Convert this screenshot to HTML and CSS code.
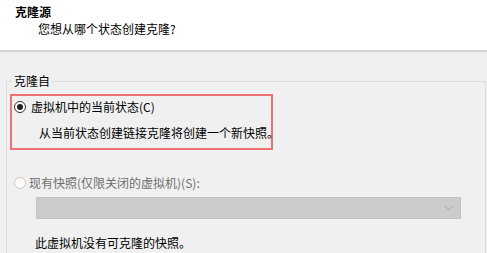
FILE: index.html
```html
<!DOCTYPE html>
<html lang="zh-CN">
<head>
<meta charset="utf-8">
<title>克隆源</title>
<link rel="stylesheet" href="styles.css">
</head>
<body>
<div class="page">
  <header class="head">
    <div class="title">克隆源</div>
    <div class="subtitle">您想从哪个状态创建克隆?</div>
  </header>
  <main class="content">
    <fieldset class="group">
      <legend class="legend">克隆自</legend>
      <div class="highlight">
        <label class="option"><span class="radio checked"></span><span>虚拟机中的当前状态(C)</span></label>
        <div class="note">从当前状态创建链接克隆将创建一个新快照。</div>
      </div>
      <label class="option disabled"><span class="radio"></span><span>现有快照(仅限关闭的虚拟机)(S):</span></label>
      <div class="select">
        <svg class="chevron" width="10" height="6" viewBox="0 0 10 6"><path d="M0.5 0.5 L5 5 L9.5 0.5" fill="none" stroke="#a9a9a9" stroke-width="1"/></svg>
      </div>
      <div class="empty">此虚拟机没有可克隆的快照。</div>
    </fieldset>
  </main>
</div>
</body>
</html>
```

FILE: styles.css
```css
* { box-sizing: border-box; }
html, body { margin: 0; padding: 0; }
body {
  width: 487px;
  height: 253px;
  overflow: hidden;
  font-family: "Noto Sans CJK SC", "Microsoft YaHei", "Noto Sans", sans-serif;
  font-size: 12px;
  line-height: 16px;
  color: #000;
  background: #f0f0f0;
}
.page { height: 253px; overflow: hidden; }
.head {
  height: 52px;
  background: #ffffff;
  padding-top: 4px;
  border-bottom: 2px solid #d3d3d3;
}
.title { padding-left: 15px; font-weight: bold; color: #000; }
.subtitle { padding-left: 38px; margin-top: 1px; color: #000; }
.content {
  background: #f0f0f0;
  padding: 21px 1px 0 6px;
}
.group {
  margin: 0;
  padding: 0 0 30px 0;
  border: 1px solid #dcdcdc;
  min-width: 0;
}
.legend {
  margin-left: 5px;
  padding: 0 2px;
  color: #000;
}
.highlight {
  margin: 5px 0 0 3px;
  width: 263px;
  border: 2px solid #ee7272;
  padding: 3px 0 7px 2px;
}
.option {
  display: flex;
  align-items: center;
  gap: 5px;
  height: 16px;
  color: #000;
  white-space: nowrap;
}
.radio {
  width: 12px;
  height: 12px;
  border-radius: 50%;
  border: 1px solid #c9c9c9;
  background: #fbfbfb;
  display: flex;
  align-items: center;
  justify-content: center;
  flex: none;
}
.radio.checked { border-color: #333; background: #fff; }
.radio.checked::after {
  content: "";
  width: 6px;
  height: 6px;
  border-radius: 50%;
  background: #222;
}
.note { margin-top: 10px; padding-left: 25px; color: #000; white-space: nowrap; }
.option.disabled {
  margin: 25px 0 0 7px;
  color: #6e6e6e;
  gap: 3px;
}
.select {
  margin: 6px 0 0 29px;
  width: 425px;
  height: 22px;
  background: #cccccc;
  border: 1px solid #c2c2c2;
  display: flex;
  align-items: center;
  justify-content: flex-end;
  padding-right: 6px;
}
.empty { margin: 16px 0 0 28px; color: #000; white-space: nowrap; }
```
